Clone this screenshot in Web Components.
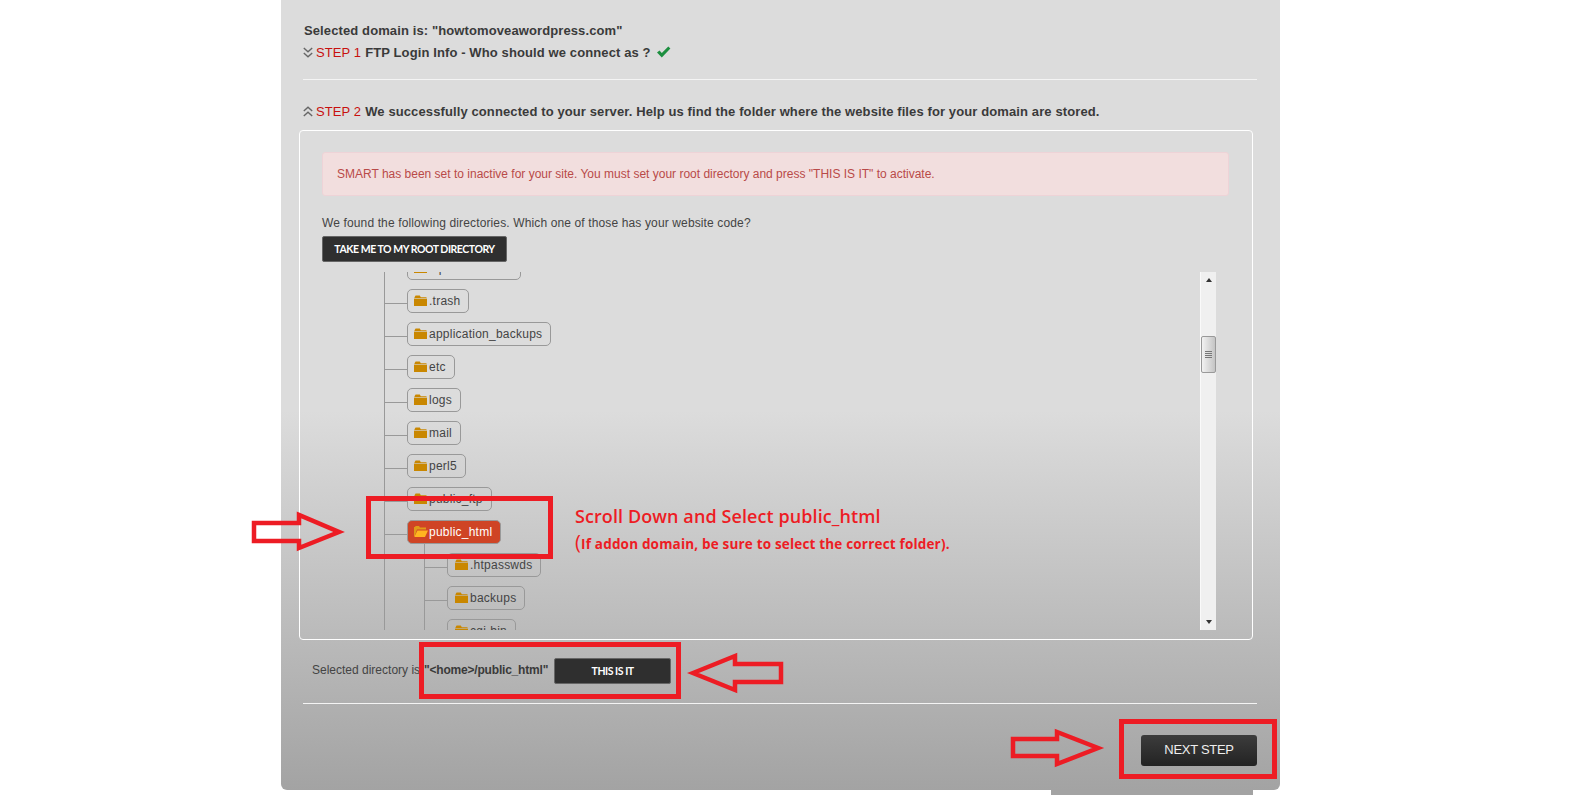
<!DOCTYPE html>
<html>
<head>
<meta charset="utf-8">
<title>Select root directory</title>
<style>
    html, body { margin: 0; height: 795px; overflow: hidden; background: #fff; }
    body { position: relative; font-family: "Liberation Sans", Arial, sans-serif; color: #3a3a3a; }
    .line { height: 22px; line-height: 24px; font-size: 13px; letter-spacing: .11px; font-weight: bold; padding-left: 1px; }
    .divider { border: 0; border-top: 1px solid #f4f4f4; margin: 0; }
    .found { margin: 17px 0 3px; font-size: 12px; letter-spacing: .13px; line-height: 20px; color: #444; }
    .tree-row { display: flex; margin: 10px 13px 0 0; height: 358px; }
    .clip { flex: 1; overflow: hidden; padding-left: 62px; }
    .clip > div { margin-top: -24px; }
    .clip > div > tree-node:first-child { padding-top: 8px; }
    .selected { display: flex; align-items: center; height: 26px; margin: 18px 0 19px 9px; font-size: 12px; color: #444; }
    .selected span { margin-top: -2px; }
    .selected b { margin-left: 4px; margin-right: 6px; letter-spacing: -.2px; color: #3a3a3a; }
    .next { display: flex; justify-content: flex-end; margin-top: 31px; }
    callout-note big { font-size: 20px; font-weight: 400; line-height: 1; }
</style>
</head>
<body>

<wizard-panel>
    <div class="line">Selected domain is: "howtomoveawordpress.com"</div>
    <step-heading step="1" dir="down" done>FTP Login Info - Who should we connect as ?</step-heading>
    <hr class="divider" style="margin-top:16px">
    <step-heading step="2" dir="up" style="margin-top:20px">We successfully connected to your server. Help us find the folder where the website files for your domain are stored.</step-heading>
    <white-box>
        <alert-box>SMART has been set to inactive for your site. You must set your root directory and press "THIS IS IT" to activate.</alert-box>
        <div class="found">We found the following directories. Which one of those has your website code?</div>
        <dark-button style="width:185px">TAKE ME TO MY ROOT DIRECTORY</dark-button>
        <div class="tree-row">
            <div class="clip"><div>
                <tree-node label=".spamassassin"></tree-node>
                <tree-node label=".trash"></tree-node>
                <tree-node label="application_backups"></tree-node>
                <tree-node label="etc"></tree-node>
                <tree-node label="logs"></tree-node>
                <tree-node label="mail"></tree-node>
                <tree-node label="perl5"></tree-node>
                <tree-node label="public_ftp"></tree-node>
                <tree-node label="public_html" selected>
                    <tree-node label=".htpasswds"></tree-node>
                    <tree-node label="backups"></tree-node>
                    <tree-node label="cgi-bin"></tree-node>
                </tree-node>
            </div></div>
            <scroll-track></scroll-track>
        </div>
    </white-box>
    <div class="selected"><span>Selected directory is</span><span><b>"&lt;home&gt;/public_html"</b></span>
        <dark-button style="width:117px">THIS IS IT</dark-button>
    </div>
    <hr class="divider">
    <div class="next"><next-button>NEXT STEP</next-button></div>
</wizard-panel>
<panel-foot></panel-foot>

<callout-box x="366" y="496" w="187" h="63"></callout-box>
<callout-box x="419" y="642" w="262" h="57"></callout-box>
<callout-box x="1119" y="719" w="158" h="60"></callout-box>

<callout-arrow points="254,523 299,523 299,515 339,532 299,548 299,541 254,541"></callout-arrow>
<callout-arrow points="693,673 735,656 735,664 781,664 781,682 735,682 735,690"></callout-arrow>
<callout-arrow points="1013,739 1057,739 1057,732 1098,748 1057,764 1057,756 1013,756"></callout-arrow>

<callout-note x="575" y="503">Scroll Down and Select public_html<small><big>(</big>If addon domain, be sure to select the correct folder).</small></callout-note>

<script>
class WizardPanel extends HTMLElement {
    constructor() {
        super();
        this.attachShadow({ mode: 'open' }).innerHTML = `
            <style>
                :host {
                    display: block;
                    box-sizing: border-box;
                    width: 999px;
                    height: 790px;
                    margin-left: 281px;
                    padding: 19px 23px 0 22px;
                    border-radius: 0 0 6px 6px;
                    background: linear-gradient(#dcdcdc 52%, #a3a3a3 100%);
                }
            </style>
            <slot></slot>
        `;
    }
}

class PanelFoot extends HTMLElement {
    constructor() {
        super();
        this.attachShadow({ mode: 'open' }).innerHTML = `
            <style>
                :host { display: block; width: 202px; height: 5px; margin-left: 1051px; background: #a3a3a3; }
            </style>
        `;
    }
}

class StepHeading extends HTMLElement {
    constructor() {
        super();
        const up = this.getAttribute('dir') === 'up';
        const chevrons = up
            ? 'M.8 5 L5 1.2 L9.2 5 M.8 10 L5 6.2 L9.2 10'
            : 'M.8 1 L5 4.8 L9.2 1 M.8 6 L5 9.8 L9.2 6';
        const check = this.hasAttribute('done') ? `
            <svg class="check" width="15" height="12" viewBox="0 0 15 12">
                <path d="M1 6.5 L3.5 4.5 L5.8 7 L12.3 .6 L14.4 2.4 L5.8 11.4 Z" fill="#1c8f3f"/>
            </svg>` : '';
        this.attachShadow({ mode: 'open' }).innerHTML = `
            <style>
                :host {
                    display: flex;
                    align-items: center;
                    height: 22px;
                    font-size: 13px;
                    letter-spacing: .11px;
                    font-weight: bold;
                    white-space: nowrap;
                }
                .chev { margin: 0 3px 0 0; }
                .step { font-size: 13px; letter-spacing: .1px; color: #c8100f; font-weight: normal; margin-right: 4px; }
                .check { margin-left: 5px; }
            </style>
            <svg class="chev" width="10" height="11" viewBox="0 0 10 11">
                <path d="${chevrons}" fill="none" stroke="#666" stroke-width="1.4"/>
            </svg>
            <span class="step">STEP ${this.getAttribute('step')}</span>
            <span><slot></slot></span>
            ${check}
        `;
    }
}

class WhiteBox extends HTMLElement {
    constructor() {
        super();
        this.attachShadow({ mode: 'open' }).innerHTML = `
            <style>
                :host {
                    display: block;
                    box-sizing: border-box;
                    height: 510px;
                    margin: 8px 4px 0 -4px;
                    padding: 21px 23px 0 22px;
                    border: 1px solid #fff;
                    border-radius: 4px;
                }
            </style>
            <slot></slot>
        `;
    }
}

class AlertBox extends HTMLElement {
    constructor() {
        super();
        this.attachShadow({ mode: 'open' }).innerHTML = `
            <style>
                :host {
                    display: block;
                    box-sizing: border-box;
                    height: 44px;
                    padding-left: 14px;
                    line-height: 42px;
                    font-size: 12px;
                    color: #b94a48;
                    background: #f2dede;
                    border: 1px solid #eed3d7;
                    border-radius: 3px;
                }
            </style>
            <slot></slot>
        `;
    }
}

class DarkButton extends HTMLElement {
    constructor() {
        super();
        this.attachShadow({ mode: 'open' }).innerHTML = `
            <style>
                :host {
                    display: flex;
                    align-items: center;
                    justify-content: center;
                    box-sizing: border-box;
                    height: 26px;
                    font-family: Lato, sans-serif;
                    font-size: 10.5px;
                    font-weight: bold;
                    letter-spacing: -.45px;
                    color: #fff;
                    background: #2f2f2f;
                    border: 1px solid #666;
                    border-radius: 2px;
                }
            </style>
            <slot></slot>
        `;
    }
}

class NextButton extends HTMLElement {
    constructor() {
        super();
        this.attachShadow({ mode: 'open' }).innerHTML = `
            <style>
                :host {
                    display: flex;
                    align-items: center;
                    justify-content: center;
                    box-sizing: border-box;
                    width: 116px;
                    height: 31px;
                    padding-bottom: 2px;
                    font-size: 13px;
                    letter-spacing: -.3px;
                    color: #eee;
                    background: linear-gradient(#3c3c3c, #232323);
                    border-radius: 3px;
                }
            </style>
            <slot></slot>
        `;
    }
}

class TreeNode extends HTMLElement {
    constructor() {
        super();
        const selected = this.hasAttribute('selected');
        const icon = selected
            ? '<path d="M0 10 V1 H1 L1.6 0 H5 L6 1.6 H12 V3.6 H3 L.8 10 Z" fill="#e09a18"/><path d="M.3 11 L3.4 4.4 H14 L11 11 Z" fill="#ffb520"/>'
            : '<path d="M.5 2.2 L1.6 .6 H5.8 L6.8 2.2 H12.5 V3 H.5 Z" fill="#c98700"/><rect x="0" y="3.6" width="13" height="7.4" fill="#c98700"/>';
        this.attachShadow({ mode: 'open' }).innerHTML = `
            <style>
                :host {
                    display: block;
                    padding-top: 9px;
                    border-left: 1px solid #999;
                }
                .row { display: flex; }
                .stub {
                    box-sizing: border-box;
                    width: 22px;
                    height: 15px;
                    border-bottom: 1px solid #999;
                }
                .pill {
                    display: flex;
                    align-items: center;
                    box-sizing: border-box;
                    height: 24px;
                    padding: 0 8px 0 var(--pill-left, 6px);
                    font-size: 12px;
                    letter-spacing: .24px;
                    color: #444;
                    border: 1px solid #999;
                    border-radius: 5px;
                }
                :host([selected]) .pill { color: #fff; background: #cf4425; }
                svg { flex: none; margin: -1px 2px 0 0; }
                :host([selected]) svg { margin-right: 1px; }
                .kids { margin-left: 39px; --pill-left: 7px; }
            </style>
            <div class="row">
                <div class="stub"></div>
                <div class="pill">
                    <svg width="${selected ? 14 : 13}" height="11" viewBox="0 0 ${selected ? 14 : 13} 11">${icon}</svg>
                    <span>${this.getAttribute('label')}</span>
                </div>
            </div>
            <div class="kids"><slot></slot></div>
        `;
    }
}

class ScrollTrack extends HTMLElement {
    constructor() {
        super();
        this.attachShadow({ mode: 'open' }).innerHTML = `
            <style>
                :host {
                    display: flex;
                    flex-direction: column;
                    align-items: center;
                    box-sizing: border-box;
                    width: 16px;
                    background: #f0f0f0;
                    border-left: 1px solid #fafafa;
                }
                .up, .down { flex: none; width: 0; height: 0; border: 3px solid transparent; }
                .up { margin-top: 6px; border-top: 0; border-bottom: 4px solid #333; }
                .down { margin-top: auto; margin-bottom: 6px; border-bottom: 0; border-top: 4px solid #333; }
                .thumb {
                    display: flex;
                    flex-direction: column;
                    justify-content: center;
                    align-items: center;
                    gap: 1px;
                    box-sizing: border-box;
                    width: 15px;
                    height: 37px;
                    margin-top: 54px;
                    background: linear-gradient(90deg, #f2f2f2, #c4c4c4);
                    border: 1px solid #999;
                    border-radius: 2px;
                }
                .thumb i { width: 7px; height: 1px; background: #777; }
            </style>
            <div class="up"></div>
            <div class="thumb"><i></i><i></i><i></i><i></i></div>
            <div class="down"></div>
        `;
    }
}

class CalloutBox extends HTMLElement {
    constructor() {
        super();
        const a = n => this.getAttribute(n);
        this.attachShadow({ mode: 'open' }).innerHTML = `
            <style>
                :host {
                    position: absolute;
                    left: ${a('x')}px;
                    top: ${a('y')}px;
                    width: ${a('w')}px;
                    height: ${a('h')}px;
                    box-sizing: border-box;
                    border: 5px solid #ed1c24;
                }
            </style>
        `;
    }
}

class CalloutArrow extends HTMLElement {
    constructor() {
        super();
        this.attachShadow({ mode: 'open' }).innerHTML = `
            <style>
                :host { position: absolute; left: 0; top: 0; width: 1580px; height: 795px; pointer-events: none; }
                svg { display: block; }
            </style>
            <svg width="1580" height="795">
                <polygon points="${this.getAttribute('points')}" fill="none" stroke="#ed1c24" stroke-width="4.5" stroke-linejoin="miter"/>
            </svg>
        `;
    }
}

class CalloutNote extends HTMLElement {
    constructor() {
        super();
        this.attachShadow({ mode: 'open' }).innerHTML = `
            <style>
                :host {
                    position: absolute;
                    left: ${this.getAttribute('x')}px;
                    top: ${this.getAttribute('y')}px;
                    font-family: "Open Sans", sans-serif;
                    font-size: 18px;
                    font-weight: 600;
                    letter-spacing: .09px;
                    line-height: 26px;
                    color: #ed1c24;
                    white-space: nowrap;
                }
                ::slotted(small) { display: block; height: 26px; margin-top: 2px; font-size: 13.5px; font-weight: 700; letter-spacing: .18px; }
            </style>
            <slot></slot>
        `;
    }
}

customElements.define('wizard-panel', WizardPanel);
customElements.define('panel-foot', PanelFoot);
customElements.define('step-heading', StepHeading);
customElements.define('white-box', WhiteBox);
customElements.define('alert-box', AlertBox);
customElements.define('dark-button', DarkButton);
customElements.define('next-button', NextButton);
customElements.define('tree-node', TreeNode);
customElements.define('scroll-track', ScrollTrack);
customElements.define('callout-box', CalloutBox);
customElements.define('callout-arrow', CalloutArrow);
customElements.define('callout-note', CalloutNote);
</script>
</body>
</html>
